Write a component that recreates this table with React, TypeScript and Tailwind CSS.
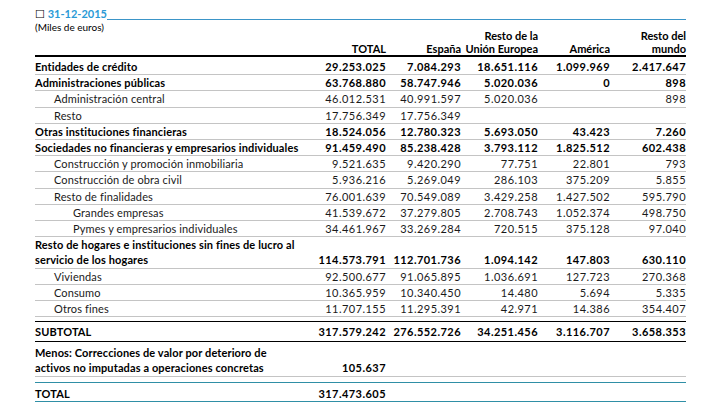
const cols = 'grid grid-cols-[265px_86px_75px_77px_72px_76px]'

type Row = {
  label: string[]
  v: string[]
  bold?: boolean
  indent?: 0 | 1 | 2
}

const rows: Row[] = [
  { label: ['Entidades de crédito'], v: ['29.253.025', '7.084.293', '18.651.116', '1.099.969', '2.417.647'], bold: true },
  { label: ['Administraciones públicas'], v: ['63.768.880', '58.747.946', '5.020.036', '0', '898'], bold: true },
  { label: ['Administración central'], v: ['46.012.531', '40.991.597', '5.020.036', '', '898'], indent: 1 },
  { label: ['Resto'], v: ['17.756.349', '17.756.349', '', '', ''], indent: 1 },
  { label: ['Otras instituciones financieras'], v: ['18.524.056', '12.780.323', '5.693.050', '43.423', '7.260'], bold: true },
  { label: ['Sociedades no financieras y empresarios individuales'], v: ['91.459.490', '85.238.428', '3.793.112', '1.825.512', '602.438'], bold: true },
  { label: ['Construcción y promoción inmobiliaria'], v: ['9.521.635', '9.420.290', '77.751', '22.801', '793'], indent: 1 },
  { label: ['Construcción de obra civil'], v: ['5.936.216', '5.269.049', '286.103', '375.209', '5.855'], indent: 1 },
  { label: ['Resto de finalidades'], v: ['76.001.639', '70.549.089', '3.429.258', '1.427.502', '595.790'], indent: 1 },
  { label: ['Grandes empresas'], v: ['41.539.672', '37.279.805', '2.708.743', '1.052.374', '498.750'], indent: 2 },
  { label: ['Pymes y empresarios individuales'], v: ['34.461.967', '33.269.284', '720.515', '375.128', '97.040'], indent: 2 },
  {
    label: ['Resto de hogares e instituciones sin fines de lucro al', 'servicio de los hogares'],
    v: ['114.573.791', '112.701.736', '1.094.142', '147.803', '630.110'],
    bold: true,
  },
  { label: ['Viviendas'], v: ['92.500.677', '91.065.895', '1.036.691', '127.723', '270.368'], indent: 1 },
  { label: ['Consumo'], v: ['10.365.959', '10.340.450', '14.480', '5.694', '5.335'], indent: 1 },
  { label: ['Otros fines'], v: ['11.707.155', '11.295.391', '42.971', '14.386', '354.407'], indent: 1 },
]

const indentClass = ['pl-0', 'pl-[19px]', 'pl-[38px]']

const num = 'text-right tracking-[0.45px]'

const DataRow = ({ r }: { r: Row }) => {
  return (
    <div
      className={`${cols} items-end leading-[15.2px] border-b border-[#c4c4c4] ${
        r.bold ? 'font-bold' : 'text-[#1a1a1a]'
      }`}
    >
      <div className={`${indentClass[r.indent ?? 0]} tracking-[0.12px]`}>
        {r.label.map((l) => (
          <div key={l}>{l}</div>
        ))}
      </div>
      {r.v.map((x, i) => (
        <div key={i} className={num}>
          {x}
        </div>
      ))}
    </div>
  )
}

const App = () => {
  return (
    <div className="w-[701px] h-[405px] bg-white overflow-hidden font-['Lato',sans-serif] text-[11px] text-black">
      <div className="ml-[35px] w-[651px] pt-[7px]">
        <div className="flex items-end h-[14px]">
          <span className="font-bold text-[11px] leading-[14px] text-[#2a9ad6]">
            <span className="font-normal text-black">☐</span> 31-12-2015
          </span>
          <div className="flex-1 border-b border-[#3b95c8] mb-[1px]" />
        </div>
        <div className={`${cols} h-[36px] border-b-2 border-black font-bold leading-[13px]`}>
          <div className="font-normal text-[10px] leading-[12px]">(Miles de euros)</div>
          <div className="self-end text-right">TOTAL</div>
          <div className="self-end text-right">España</div>
          <div className="self-end text-right">
            Resto de la
            <br />
            Unión Europea
          </div>
          <div className="self-end text-right">América</div>
          <div className="self-end text-right">
            Resto del
            <br />
            mundo
          </div>
        </div>
        <div className="mt-[2px] mb-[4px]">
          {rows.map((r, i) => (
            <DataRow key={i} r={r} />
          ))}
        </div>
        <div className={`${cols} h-[21px] items-center font-bold border-y border-black`}>
          <div className="tracking-[0.12px]">SUBTOTAL</div>
          <div className={num}>317.579.242</div>
          <div className={num}>276.552.726</div>
          <div className={num}>34.251.456</div>
          <div className={num}>3.116.707</div>
          <div className={num}>3.658.353</div>
        </div>
        <div className={`${cols} items-end pt-[3px] pb-[1px] font-bold leading-[15px] border-b border-[#c4c4c4]`}>
          <div className="tracking-[0.12px]">
            Menos: Correcciones de valor por deterioro de
            <br />
            activos no imputadas a operaciones concretas
          </div>
          <div className={num}>105.637</div>
        </div>
        <div className={`${cols} mt-[5px] h-[20px] pt-[3px] leading-[15px] font-bold border-y border-[#2f8fa6]`}>
          <div className="tracking-[0.12px]">TOTAL</div>
          <div className={num}>317.473.605</div>
        </div>
      </div>
    </div>
  )
}

export default App
